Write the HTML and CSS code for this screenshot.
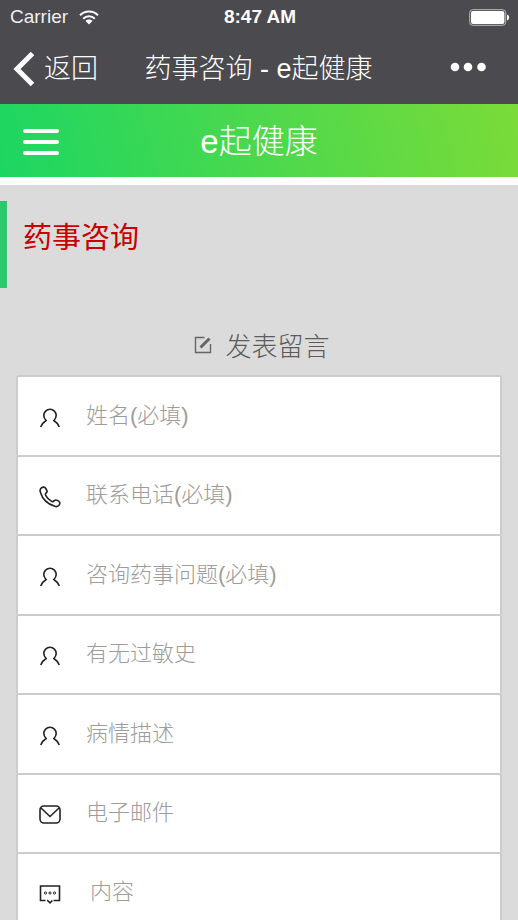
FILE: index.html
```
<!DOCTYPE html>
<html lang="zh-CN">
<head>
<meta charset="utf-8">
<meta name="viewport" content="width=device-width, initial-scale=1">
<title>药事咨询 - e起健康</title>
<link rel="stylesheet" href="styles.css">
</head>
<body>
<svg class="sprite" aria-hidden="true">
  <symbol id="user" viewBox="0 0 22 22"><path d="M1.700 20C2.600 17.300 4.500 15.200 7.100 13.500C5.600 12 4.800 10.500 4.800 8.600A6.200 6.300 0 0 1 17.200 8.600C17.200 10.500 16.400 12 14.900 13.500C17.500 15.200 19.400 17.300 20.300 20"/></symbol>
  <symbol id="phone" viewBox="0 0 22 22"><path d="M2.600 1.700C4.400 .7 6.200 1.400 7.100 3L7.800 4.300C8.300 5.300 8 6.300 7.200 6.900C6.300 7.600 6.200 8.600 6.800 9.600C8.200 12.100 10.100 14 12.600 15.400C13.500 15.900 14.300 15.600 15 14.900C15.900 14 17.200 13.800 18.400 14.400L19.300 14.900C20.900 15.800 21.300 17.500 20.300 18.900C19.200 20.400 17.600 20.900 15.800 20.300C8.900 18.100 3.300 12.700 1.400 6.200C.8 4.200 1.200 2.500 2.600 1.700Z"/></symbol>
  <symbol id="mail" viewBox="0 0 22 22"><rect x="1" y="2" width="20" height="17" rx="4"/><path d="M2 4L11 12.500L20 4"/></symbol>
  <symbol id="comment" viewBox="0 0 22 22"><path d="M6.500 17.500H1.500V3H20.500V17.500H14.500M8 17.500H8.600L11 19.800L13.400 17.500"/><g stroke-width="1"><circle cx="6.500" cy="10" r="1.100"/><circle cx="11" cy="10" r="1.100"/><circle cx="15.500" cy="10" r="1.100"/></g></symbol>
</svg>
<header class="top">
  <div class="status">
    <div class="carrier">
      <span>Carrier</span>
      <svg class="wifi" viewBox="0 0 20 15" aria-hidden="true"><path d="M1 5.200C6 .2 14 .2 19 5.200M4.200 8.700C7.500 5.500 12.500 5.500 15.800 8.700"/><path class="dot" d="M6.500 11C8.500 9.100 11.500 9.100 13.500 11L10 14.500Z"/></svg>
    </div>
    <span class="clock">8:47 AM</span>
    <svg class="battery" viewBox="0 0 41 17" aria-hidden="true"><rect class="shell" x=".7" y=".7" width="36" height="15.600" rx="3"/><rect x="2" y="2" width="33.400" height="13" rx="2"/><path d="M38 5.500C40.800 6 40.800 11 38 11.500Z"/></svg>
  </div>
  <nav class="nav">
    <a class="back" href="#"><svg viewBox="0 0 22 36" aria-hidden="true"><path d="M19.500 2.500L4 18L19.500 33.500"/></svg>返回</a>
    <span class="nav-title">药事咨询 - e起健康</span>
    <button class="more" type="button" aria-label="更多"><svg viewBox="0 0 36 10" aria-hidden="true"><circle cx="5" cy="5" r="4.300"/><circle cx="18" cy="5" r="4.300"/><circle cx="31.500" cy="5" r="4.300"/></svg></button>
  </nav>
</header>
<div class="brand">
  <button class="menu" type="button" aria-label="菜单"><span></span><span></span><span></span></button>
  <span class="brand-name">e起健康</span>
</div>
<main class="page">
  <h1 class="title">药事咨询</h1>
  <h2 class="subtitle"><svg viewBox="0 0 18 18" aria-hidden="true"><path d="M10.500 1.500H1.500V16.500H16.500V8"/><path class="pen" d="M6.500 11.500L15.500 2.500"/></svg>发表留言</h2>
  <form class="form">
    <div class="fields">
      <label class="row"><svg><use href="#user"/></svg><input type="text" placeholder="姓名(必填)" aria-label="姓名"></label>
      <label class="row"><svg><use href="#phone"/></svg><input type="tel" placeholder="联系电话(必填)" aria-label="联系电话"></label>
      <label class="row"><svg><use href="#user"/></svg><input type="text" placeholder="咨询药事问题(必填)" aria-label="咨询药事问题"></label>
      <label class="row"><svg><use href="#user"/></svg><input type="text" placeholder="有无过敏史" aria-label="有无过敏史"></label>
      <label class="row"><svg><use href="#user"/></svg><input type="text" placeholder="病情描述" aria-label="病情描述"></label>
      <label class="row"><svg><use href="#mail"/></svg><input type="email" placeholder="电子邮件" aria-label="电子邮件"></label>
    </div>
    <label class="row message"><svg><use href="#comment"/></svg><textarea rows="1" placeholder="内容" aria-label="内容"></textarea></label>
  </form>
</main>
</body>
</html>
```
FILE: styles.css
```
* { box-sizing: border-box; }
html { height: 100%; }
body {
  margin: 0;
  min-height: 100%;
  display: flex;
  flex-direction: column;
  background: #dbdbdb;
  font-family: "Liberation Sans", "Noto Sans CJK SC", sans-serif;
  font-weight: 300;
}
button { border: 0; padding: 0; background: none; cursor: pointer; }
svg { display: block; flex: none; fill: none; }
.sprite { position: absolute; width: 0; height: 0; }

.top { background: #4b4a4f; color: #fff; }
.status {
  display: grid;
  grid-template-columns: 1fr auto 1fr;
  align-items: center;
  height: 34px;
  padding: 0 8px 0 10px;
  font-size: 19px;
  line-height: 24px;
}
.carrier { display: flex; align-items: center; gap: 11px; color: #f0f0f0; }
.wifi { width: 20px; height: 15px; stroke: #fff; stroke-width: 2; }
.wifi .dot { fill: #fff; stroke: none; }
.clock { font-weight: 700; }
.battery { width: 41px; height: 17px; justify-self: end; fill: #fff; }
.battery .shell { fill: none; stroke: #bbb; stroke-width: 1; }

.nav {
  display: grid;
  grid-template-columns: 1fr auto 1fr;
  align-items: center;
  height: 70px;
  padding: 0 32px 0 13px;
  font-size: 27px;
  line-height: 40px;
}
.back {
  display: flex;
  align-items: center;
  gap: 9px;
  color: #fff;
  text-decoration: none;
}
.back svg { width: 22px; height: 36px; stroke: #fff; stroke-width: 5; }
.nav-title { margin-left: 18px; }
.more { justify-self: end; }
.more svg { width: 36px; height: 10px; margin-bottom: 4px; fill: #fff; }

.brand {
  display: grid;
  grid-template-columns: 1fr auto 1fr;
  align-items: center;
  height: 81px;
  padding: 2px 23px 0;
  border-bottom: 8px solid #fff;
  background: linear-gradient(75deg, #1cd662, #7bdb38) padding-box;
  color: #fff;
}
.menu { display: grid; gap: 7px; width: 36px; }
.menu span { height: 4px; border-radius: 2px; background: #fff; }
.brand-name { font-size: 33px; line-height: 48px; }

.page { flex: 1; display: flex; flex-direction: column; padding-top: 16px; }
.title {
  height: 87px;
  margin: 0;
  padding: 17px 16px;
  border-left: 7px solid #2cc86b;
  color: #c80000;
  font-size: 29px;
  font-weight: 400;
  line-height: 40px;
}
.subtitle {
  display: flex;
  justify-content: center;
  align-items: center;
  gap: 13px;
  height: 56px;
  margin: 31px 0 0;
  padding-left: 6px;
  color: #5c5c5c;
  font-size: 26px;
  font-weight: 300;
  line-height: 40px;
}
.subtitle svg { width: 18px; height: 18px; margin-bottom: 4px; stroke: #666; stroke-width: 1.4; }
.subtitle .pen { stroke-width: 3; }

.form {
  flex: 1;
  display: flex;
  flex-direction: column;
  margin: 0 16px;
}
.fields { display: grid; grid-auto-rows: 1fr; min-height: 477px; }
.row {
  display: flex;
  align-items: center;
  gap: 25px;
  padding: 0 21px;
  border: 2px solid #ccc;
  border-bottom: 0;
  border-radius: 3px 3px 0 0;
  background: #fff;
}
.row svg { width: 22px; height: 22px; margin-top: 4px; stroke: #222; stroke-width: 1.6; }
.row input, .row textarea {
  flex: 1;
  min-width: 0;
  margin: 0;
  padding: 0;
  border: 0;
  outline: 0;
  resize: none;
  background: none;
  color: #333;
  font: inherit;
  font-size: 22px;
  line-height: 36px;
}
::placeholder { color: #9c9c9c; opacity: 1; }
.message { flex: 1; align-items: flex-start; padding-top: 20px; }
.message svg { margin-top: 9px; }
.row textarea { height: 36px; padding-left: 4px; overflow: hidden; }
```
